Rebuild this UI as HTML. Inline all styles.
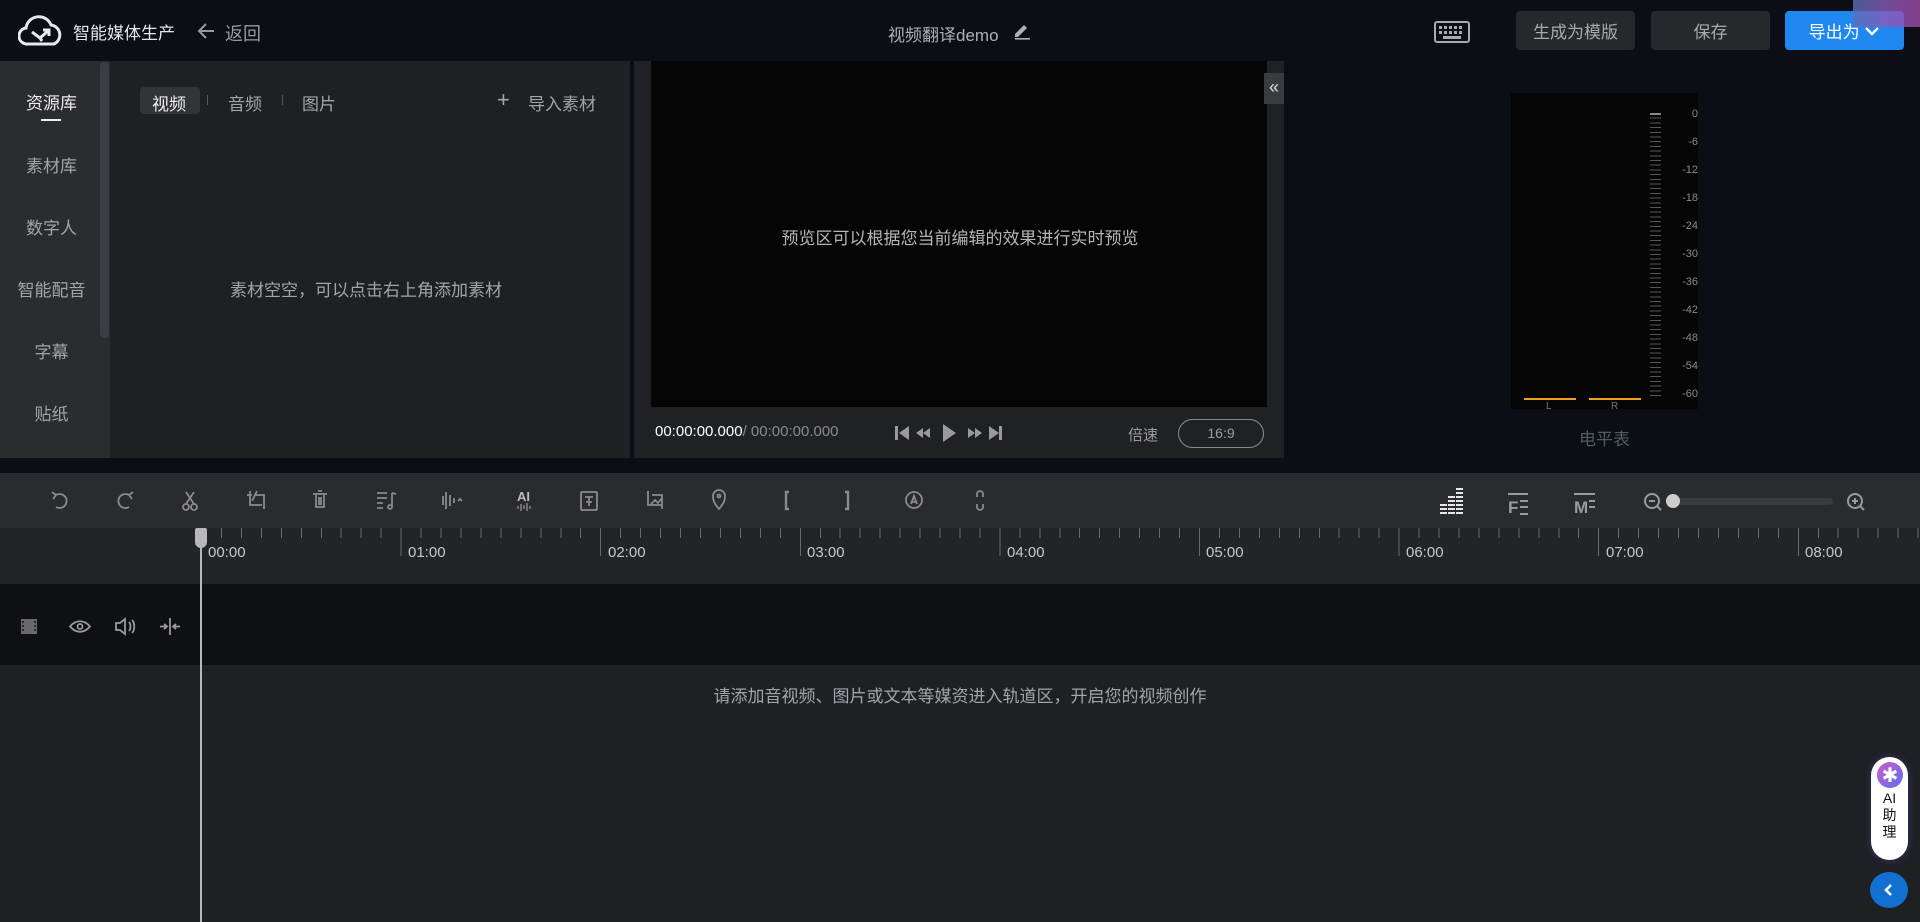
<!DOCTYPE html>
<html><head><meta charset="utf-8">
<style>
*{margin:0;padding:0;box-sizing:border-box}
body{width:1920px;height:922px;overflow:hidden;background:#0b0e14;font-family:"Liberation Sans","Noto Sans CJK SC",sans-serif;position:relative;color:#b5b5b8}
.a{position:absolute}
.btn{position:absolute;top:11px;height:39px;border-radius:4px;background:#27282c;color:#a8a9ad;font-size:17px;display:flex;align-items:center;justify-content:center}
.nav{position:absolute;left:0;width:103px;text-align:center;font-size:17px;color:#a3a4a8}
.lbl{position:absolute;top:544px;font-size:15px;color:#c8c8cc}
.ml{position:absolute;right:222px;font-size:11px;color:#8a8a8a}
</style></head><body>
<svg class="a" style="left:18px;top:14px" width="46" height="34" viewBox="0 0 46 34"><path d="M10 30 A8 8 0 0 1 8 14 A13 13 0 0 1 33 11 A10 10 0 0 1 36 30 Z" fill="none" stroke="#e8e8e8" stroke-width="3"/><path d="M14 18 L22 24 M22 24 L30 17 M25 16 L31 16 L31 22 M22 24 L24 27" fill="none" stroke="#e8e8e8" stroke-width="3"/></svg>
<div class="a" style="left:73px;top:19px;font-size:17px;color:#e6e6e6">智能媒体生产</div>
<svg class="a" style="left:197px;top:21px" width="20" height="20" viewBox="0 0 20 20"><path d="M17 10H3M9 3L2 10l7 7" fill="none" stroke="#9a9a9e" stroke-width="2"/></svg>
<div class="a" style="left:225px;top:20px;font-size:18px;color:#9a9a9e">返回</div>
<div class="a" style="left:888px;top:21px;font-size:17px;color:#b0b0b4">视频翻译demo</div>
<svg class="a" style="left:1012px;top:20px" width="20" height="20" viewBox="0 0 20 20"><path d="M3 14l9-9 3 3-9 9H3z" fill="#b0b0b4"/><rect x="3" y="18" width="15" height="1.6" fill="#b0b0b4"/></svg>
<svg class="a" style="left:1434px;top:21px" width="36" height="22" viewBox="0 0 36 22"><rect x="1" y="1" width="34" height="20" rx="2" fill="none" stroke="#aaa" stroke-width="2"/><g fill="#aaa"><rect x="5" y="5" width="3" height="3"/><rect x="10" y="5" width="3" height="3"/><rect x="15" y="5" width="3" height="3"/><rect x="20" y="5" width="3" height="3"/><rect x="25" y="5" width="3" height="3"/><rect x="5" y="10" width="3" height="3"/><rect x="10" y="10" width="3" height="3"/><rect x="15" y="10" width="3" height="3"/><rect x="20" y="10" width="3" height="3"/><rect x="25" y="10" width="3" height="3"/><rect x="9" y="15" width="18" height="3"/></g></svg>
<div class="btn" style="left:1516px;width:119px">生成为模版</div>
<div class="btn" style="left:1651px;width:119px">保存</div>
<div class="btn" style="left:1785px;width:119px;background:#1e87f0;color:#fff">导出为&nbsp;<svg width="16" height="10" viewBox="0 0 16 10"><path d="M2 2l6 6 6-6" fill="none" stroke="#fff" stroke-width="2.4"/></svg></div>
<div class="a" style="left:1853px;top:0;width:67px;height:27px;background:linear-gradient(90deg,#5a6fb8,#8a5bb8,#a04aa8);opacity:.8"></div>

<div class="a" style="left:0;top:61px;width:110px;height:397px;background:#2b2c30"></div>
<div class="a" style="left:100px;top:62px;width:9px;height:276px;border-radius:4px;background:#3c3d42"></div>
<div class="a" style="left:110px;top:61px;width:520px;height:397px;background:#1f2024"></div>
<div class="nav" style="top:89px;color:#ececec">资源库</div>
<div class="a" style="left:41px;top:119px;width:20px;height:2px;background:#eee"></div>
<div class="nav" style="top:152px">素材库</div>
<div class="nav" style="top:214px">数字人</div>
<div class="nav" style="top:276px">智能配音</div>
<div class="nav" style="top:338px">字幕</div>
<div class="nav" style="top:400px">贴纸</div>
<div class="a" style="left:140px;top:87px;width:60px;height:27px;border-radius:4px;background:#333438"></div>
<div class="a" style="left:152px;top:90px;font-size:17px;color:#eee">视频</div>
<div class="a" style="left:207px;top:95px;width:1px;height:10px;background:#555"></div>
<div class="a" style="left:228px;top:90px;font-size:17px;color:#a3a4a8">音频</div>
<div class="a" style="left:282px;top:95px;width:1px;height:10px;background:#555"></div>
<div class="a" style="left:302px;top:90px;font-size:17px;color:#a3a4a8">图片</div>
<div class="a" style="left:497px;top:87px;font-size:22px;color:#a3a4a8">+</div>
<div class="a" style="left:528px;top:90px;font-size:17px;color:#a3a4a8">导入素材</div>
<div class="a" style="left:230px;top:276px;font-size:17px;color:#a3a4a8">素材空空，可以点击右上角添加素材</div>

<div class="a" style="left:634px;top:61px;width:650px;height:397px;background:#202125"></div>
<div class="a" style="left:651px;top:61px;width:616px;height:346px;background:#050505"></div>
<div class="a" style="left:1264px;top:73px;width:20px;height:31px;background:#3a3b3f;color:#ddd;font-size:18px;text-align:center;line-height:29px">«</div>
<div class="a" style="left:0;top:224px;width:1920px;text-align:center;font-size:17px;color:#b5b5b8">预览区可以根据您当前编辑的效果进行实时预览</div>
<div class="a" style="left:655px;top:423px;font-size:15px;color:#fff">00:00:00.000<span style="color:#8a8a8e">/ 00:00:00.000</span></div>
<svg class="a" style="left:893px;top:422px" width="136" height="22" viewBox="0 0 136 22"><g fill="#9a9a9e"><rect x="2" y="4" width="3" height="14"/><path d="M16 4v14L6 11z"/><path d="M30 6v10l-7-5zM37 6v10l-7-5z"/><path d="M50 2v18l13-9z"/><path d="M75 6v10l7-5zM82 6v10l7-5z"/><path d="M96 4v14l10-7z"/><rect x="106" y="4" width="3" height="14"/></g></svg>
<div class="a" style="left:1128px;top:424px;font-size:15px;color:#9a9a9e">倍速</div>
<div class="a" style="left:1178px;top:419px;width:86px;height:29px;border:1px solid #8a8a8e;border-radius:15px;color:#9a9a9e;font-size:14px;text-align:center;line-height:27px">16:9</div>

<div class="a" style="left:1511px;top:93px;width:187px;height:316px;background:#050505"></div>
<div class="a" style="left:1650px;top:113px;width:11px;height:285px;background:repeating-linear-gradient(#555 0 1px,transparent 1px 4.7px)"></div>
<div class="a" style="left:1650px;top:113px;width:11px;height:2px;background:#888"></div>
<div class="ml" style="top:108px">0</div><div class="ml" style="top:136px">-6</div><div class="ml" style="top:164px">-12</div><div class="ml" style="top:192px">-18</div><div class="ml" style="top:220px">-24</div><div class="ml" style="top:248px">-30</div><div class="ml" style="top:276px">-36</div><div class="ml" style="top:304px">-42</div><div class="ml" style="top:332px">-48</div><div class="ml" style="top:360px">-54</div><div class="ml" style="top:388px">-60</div>
<div class="a" style="left:1524px;top:398px;width:52px;height:2px;background:#f0a020"></div>
<div class="a" style="left:1589px;top:398px;width:52px;height:2px;background:#f0a020"></div>
<div class="a" style="left:1546px;top:401px;font-size:10px;color:#777">L</div>
<div class="a" style="left:1611px;top:401px;font-size:10px;color:#777">R</div>
<div class="a" style="left:1579px;top:425px;font-size:17px;color:#555a60">电平表</div>

<div class="a" style="left:0;top:473px;width:1920px;height:55px;background:#2a2b2f"></div>
<svg class="a" style="left:0;top:473px" width="1920" height="55" viewBox="0 0 1920 55" fill="none" stroke="#8a8a8e" stroke-width="1.8">
<path d="M56 22a7 7 0 1 1 0 12M56 22l-4-3M56 22l-3 4"/>
<path d="M129 22a7 7 0 1 0 0 12M129 22l4-3M129 22l3 4"/>
<circle cx="186" cy="34" r="3"/><circle cx="194" cy="34" r="3"/><path d="M186 31l8-12M194 31l-8-12"/>
<path d="M250 18v14h12M254 22h10v14M247 22h5M257 18l-5 10"/>
<path d="M313 21h14M316 21v13h8v-13M318 18h4M319 24v8M321 24v8"/>
<path d="M377 20h10M377 25h10M377 30h6M377 35h6M392 20v13M392 20l4 1"/><circle cx="390" cy="34" r="2"/>
<path d="M443 23v9M446 19v17M450 22v11M454 25v5M458 28l2-2 2 2"/>
<text x="517" y="28" font-size="13" font-weight="bold" fill="#bbb" stroke="none" font-family="Liberation Sans">AI</text>
<path d="M518 33v3M521 31v7M524 32v4M527 30v8M530 33v3" stroke-width="1.4"/>
<rect x="581" y="19" width="16" height="18" rx="1"/><path d="M585 24h8M589 24v9M586 29h6"/>
<path d="M648 18v14h14M652 22h10v14M651 31l4-4 3 3 4-5"/>
<path d="M719 36c-6-7-6-10-6-13a6 6 0 0 1 12 0c0 3 0 6-6 13z"/><circle cx="719" cy="23" r="1.5"/>
<path d="M789 19h-3v17h3" stroke-width="2.4"/>
<path d="M845 19h3v17h-3" stroke-width="2.4"/>
<circle cx="914" cy="27" r="8"/><path d="M911 31l3-8 3 8M912 29h4"/>
<path d="M977 24v-3a3 3 0 0 1 6 0v3M977 31v3a3 3 0 0 0 6 0v-3"/>
</svg>
<svg class="a" style="left:1440px;top:488px" width="440" height="28" viewBox="0 0 440 28"><g fill="#e6e6e6"><rect x="0" y="16" width="7" height="2"/><rect x="0" y="20" width="7" height="2"/><rect x="0" y="24" width="7" height="2"/><rect x="8" y="8" width="7" height="2"/><rect x="8" y="12" width="7" height="2"/><rect x="8" y="16" width="7" height="2"/><rect x="8" y="20" width="7" height="2"/><rect x="8" y="24" width="7" height="2"/><rect x="16" y="0" width="7" height="2"/><rect x="16" y="4" width="7" height="2"/><rect x="16" y="8" width="7" height="2"/><rect x="16" y="12" width="7" height="2"/><rect x="16" y="16" width="7" height="2"/><rect x="16" y="20" width="7" height="2"/><rect x="16" y="24" width="7" height="2"/></g>
<text x="68" y="25" font-size="17" font-weight="bold" fill="#9a9a9e" font-family="Liberation Sans">F</text><g fill="#9a9a9e"><rect x="80" y="12" width="8" height="2"/><rect x="80" y="18" width="8" height="2"/><rect x="68" y="5" width="20" height="2"/><rect x="80" y="25" width="8" height="2"/></g>
<text x="134" y="25" font-size="17" font-weight="bold" fill="#9a9a9e" font-family="Liberation Sans">M</text><g fill="#9a9a9e"><rect x="149" y="12" width="6" height="2"/><rect x="149" y="18" width="6" height="2"/><rect x="134" y="5" width="21" height="2"/></g>
<g fill="none" stroke="#9a9a9e" stroke-width="2"><circle cx="212" cy="13" r="7"/><path d="M217 18l4 4M209 13h6"/><circle cx="415" cy="13" r="7"/><path d="M420 18l4 4M412 13h6M415 10v6"/></g>
<rect x="228" y="10" width="165" height="7" rx="3.5" fill="#3a3b3f"/><circle cx="233" cy="13" r="7" fill="#ccc"/></svg>

<div class="a" style="left:0;top:528px;width:1920px;height:56px;background:#232428"></div>
<div class="a" style="left:201px;top:528px;width:1719px;height:10px;background:repeating-linear-gradient(90deg,#6a6a6e 0 1px,transparent 1px 19.96px)"></div>
<div class="a" style="left:201px;top:528px;width:1719px;height:28px;background:repeating-linear-gradient(90deg,#6a6a6e 0 1px,transparent 1px 199.6px)"></div>
<div class="lbl" style="left:208px">00:00</div><div class="lbl" style="left:408px">01:00</div><div class="lbl" style="left:608px">02:00</div><div class="lbl" style="left:807px">03:00</div><div class="lbl" style="left:1007px">04:00</div><div class="lbl" style="left:1206px">05:00</div><div class="lbl" style="left:1406px">06:00</div><div class="lbl" style="left:1606px">07:00</div><div class="lbl" style="left:1805px">08:00</div>

<div class="a" style="left:0;top:584px;width:1920px;height:81px;background:#0f1013"></div>
<div class="a" style="left:0;top:665px;width:1920px;height:257px;background:#1f2024"></div>
<svg class="a" style="left:0;top:612px" width="200" height="28" viewBox="0 0 200 28" fill="none" stroke="#9a9a9e" stroke-width="1.8">
<rect x="21" y="7" width="16" height="15" fill="#6a6a6e" stroke="none"/><g fill="#2a2a2e" stroke="none"><rect x="22" y="9" width="2" height="2"/><rect x="22" y="13" width="2" height="2"/><rect x="22" y="17" width="2" height="2"/><rect x="34" y="9" width="2" height="2"/><rect x="34" y="13" width="2" height="2"/><rect x="34" y="17" width="2" height="2"/></g>
<path d="M70 14.5c6-7 14-7 20 0c-6 7-14 7-20 0z"/><circle cx="80" cy="14.5" r="2.5"/>
<path d="M116 11h4l5-4v15l-5-4h-4zM129 10c2 2 2 7 0 9M132 8c3 3 3 10 0 13"/>
<path d="M170 6v17M160 14.5h6M174 14.5h6M164 12l3 2.5-3 2.5M176 12l-3 2.5 3 2.5"/>
</svg>
<div class="a" style="left:0;top:682px;width:1920px;text-align:center;font-size:17px;color:#a3a4a8">请添加音视频、图片或文本等媒资进入轨道区，开启您的视频创作</div>
<div class="a" style="left:200px;top:530px;width:2px;height:392px;background:#b8b8bc"></div>
<div class="a" style="left:195px;top:528px;width:12px;height:20px;border-radius:2px 2px 6px 6px;background:#b8b8bc"></div>

<div class="a" style="left:1871px;top:757px;width:37px;height:103px;border-radius:19px;background:#fff;box-shadow:0 0 8px rgba(80,90,200,.4);text-align:center;font-size:14px;color:#111;line-height:17px;padding-top:33px">AI<br>助<br>理</div>
<div class="a" style="left:1877px;top:762px;width:26px;height:26px;border-radius:50%;background:linear-gradient(135deg,#d05cc8,#5a6ef0);color:#fff;font-size:20px;line-height:28px;text-align:center">✱</div>
<div class="a" style="left:1870px;top:872px;width:38px;height:36px;border-radius:50%;background:#1170d0"></div>
<svg class="a" style="left:1882px;top:882px" width="14" height="16" viewBox="0 0 14 16"><path d="M9 3L4 8l5 5" fill="none" stroke="#fff" stroke-width="2.6"/></svg>
</body></html>
